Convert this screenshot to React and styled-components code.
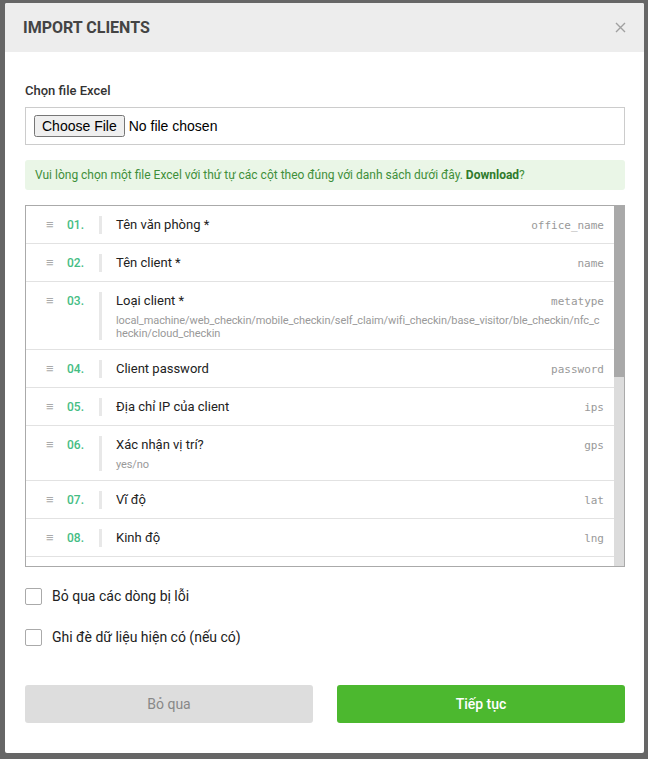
import React from "react";
import styled, { createGlobalStyle } from "styled-components";

const Global = createGlobalStyle`
  html, body { margin: 0; padding: 0; }
  body {
    background: #666666;
    font-family: Roboto, "Liberation Sans", Arial, sans-serif;
    color: #222;
    height: 759px;
    overflow: hidden;
  }
  * { box-sizing: border-box; }
`;

const Modal = styled.div`
  width: 639px;
  margin: 3px 0 0 5px;
  background: #fff;
  border-radius: 2px;
  overflow: hidden;
`;

const Header = styled.div`
  height: 49px;
  background: #ededed;
  display: flex;
  align-items: center;
  justify-content: space-between;
  padding: 0 18px 0 18px;
`;

const Title = styled.h2`
  margin: 0;
  font-size: 16px;
  font-weight: 700;
  color: #444;
  text-transform: uppercase;
`;

const Close = styled.button`
  border: 0;
  background: none;
  padding: 0;
  width: 12px;
  height: 12px;
  display: flex;
  align-items: center;
  justify-content: center;
  cursor: pointer;
`;

const Body = styled.div`
  padding: 30px 19px 30px 20px;
  display: flex;
  flex-direction: column;
`;

const Label = styled.label`
  font-size: 13px;
  font-weight: 500;
  color: #333;
  line-height: 18px;
  margin-bottom: 7px;
`;

const FileBox = styled.div`
  height: 38px;
  border: 1px solid #ccc;
  display: flex;
  align-items: center;
  padding: 0 8px;
  input {
    font-family: "Liberation Sans", Arial, sans-serif;
    font-size: 14px;
    color: #000;
  }
`;

const Alert = styled.div`
  margin-top: 15px;
  background: #eaf6e7;
  color: #3f8f3a;
  font-size: 12px;
  line-height: 16px;
  padding: 7px 10px;
  border-radius: 3px;
  b { color: #2f7a2c; font-weight: 700; }
`;

const List = styled.div`
  margin-top: 15px;
  height: 362px;
  border: 1px solid #aaa;
  display: flex;
`;

const Scroller = styled.div`
  flex: 1;
  min-width: 0;
  overflow-y: auto;
  scrollbar-width: none;
  &::-webkit-scrollbar { display: none; }
`;

const Track = styled.div`
  width: 10px;
  flex: none;
  background: #dcdcdc;
`;

const Thumb = styled.div`
  height: 171px;
  background: #a9a9a9;
`;

const Row = styled.div`
  display: flex;
  align-items: flex-start;
  padding: 10px 10px 9px 20px;
  border-bottom: 1px solid #e2e2e2;
`;

const Handle = styled.span`
  width: 21px;
  flex: none;
  color: #aaa;
  font-size: 13px;
  line-height: 18px;
`;

const Num = styled.span`
  width: 32px;
  flex: none;
  color: #45bd84;
  font-size: 12px;
  font-weight: 500;
  line-height: 18px;
`;

const Content = styled.div`
  flex: 1;
  min-width: 0;
  border-left: 3px solid #e8e8e8;
  padding-left: 14px;
`;

const TopLine = styled.div`
  display: flex;
  justify-content: space-between;
  align-items: baseline;
`;

const FieldName = styled.span`
  font-size: 13px;
  line-height: 18px;
  color: #222;
`;

const Code = styled.code`
  font-family: "DejaVu Sans Mono", "Liberation Mono", monospace;
  font-size: 11px;
  color: #999;
`;

const Sub = styled.div`
  margin-top: 4px;
  font-size: 11px;
  line-height: 13px;
  letter-spacing: -0.1px;
  color: #999;
  word-break: break-all;
`;

const Check = styled.label`
  display: flex;
  align-items: center;
  gap: 10px;
  font-size: 14px;
  color: #222;
  line-height: 20px;
  margin-top: ${(p) => p.$top}px;
  input {
    appearance: none;
    margin: 0;
    width: 17px;
    height: 17px;
    border: 1px solid #aaa;
    border-radius: 2px;
    background: #fff;
  }
`;

const Actions = styled.div`
  margin-top: 38px;
  display: grid;
  grid-template-columns: 1fr 1fr;
  gap: 24px;
`;

const Btn = styled.button`
  height: 38px;
  border: 0;
  border-radius: 3px;
  font-family: Roboto, "Liberation Sans", Arial, sans-serif;
  font-size: 14px;
  font-weight: ${(p) => (p.$primary ? 500 : 400)};
  background: ${(p) => (p.$primary ? "#4cb82f" : "#dddddd")};
  color: ${(p) => (p.$primary ? "#fff" : "#888")};
`;

const fields = [
  ["Tên văn phòng *", "office_name"],
  ["Tên client *", "name"],
  ["Loại client *", "metatype", "local_machine/web_checkin/mobile_checkin/self_claim/wifi_checkin/base_visitor/ble_checkin/nfc_checkin/cloud_checkin"],
  ["Client password", "password"],
  ["Địa chỉ IP của client", "ips"],
  ["Xác nhận vị trí?", "gps", "yes/no"],
  ["Vĩ độ", "lat"],
  ["Kinh độ", "lng"],
  ["Bán kính (m)", "radius"],
  ["Địa chỉ", "address"],
  ["Tên wifi", "ssid"],
  ["Địa chỉ MAC wifi", "bssid"],
  ["Mã thiết bị", "device_id"],
  ["Mã NFC", "nfc_id"],
  ["Mã BLE", "ble_id"],
  ["Múi giờ", "timezone"],
  ["Ghi chú", "note"],
  ["Trạng thái", "status"],
  ["Ngày tạo", "created_at"],
];

export default function App() {
  return (
    <>
      <Global />
      <Modal>
        <Header>
          <Title>Import clients</Title>
          <Close aria-label="close">
            <svg width="11" height="11" viewBox="0 0 11 11">
              <path d="M1 1L10 10M10 1L1 10" stroke="#a0a0a0" strokeWidth="1.4" fill="none" />
            </svg>
          </Close>
        </Header>
        <Body>
          <Label>Chọn file Excel</Label>
          <FileBox>
            <input type="file" />
          </FileBox>
          <Alert>
            Vui lòng chọn một file Excel với thứ tự các cột theo đúng với danh sách dưới đây. <b>Download</b>?
          </Alert>
          <List>
            <Scroller>
              {fields.map(([name, code, sub], i) => (
                <Row key={code}>
                  <Handle>≡</Handle>
                  <Num>{String(i + 1).padStart(2, "0")}.</Num>
                  <Content>
                    <TopLine>
                      <FieldName>{name}</FieldName>
                      <Code>{code}</Code>
                    </TopLine>
                    {sub && <Sub>{sub}</Sub>}
                  </Content>
                </Row>
              ))}
            </Scroller>
            <Track>
              <Thumb />
            </Track>
          </List>
          <Check $top={19}>
            <input type="checkbox" />
            Bỏ qua các dòng bị lỗi
          </Check>
          <Check $top={21}>
            <input type="checkbox" />
            Ghi đè dữ liệu hiện có (nếu có)
          </Check>
          <Actions>
            <Btn>Bỏ qua</Btn>
            <Btn $primary>Tiếp tục</Btn>
          </Actions>
        </Body>
      </Modal>
    </>
  );
}
